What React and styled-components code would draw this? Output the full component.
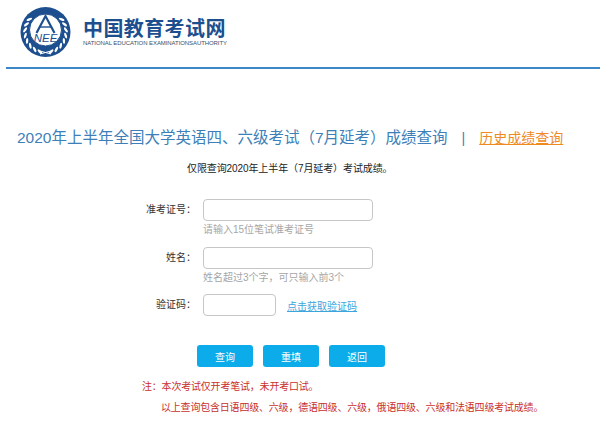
import React from "react";
import styled, { createGlobalStyle } from "styled-components";

const GlobalStyle = createGlobalStyle`
  html, body { margin: 0; padding: 0; background: #fff; }
  body { font-family: "Liberation Sans", "Noto Sans CJK SC", sans-serif; }
`;

const Page = styled.div`
  width: 600px;
  height: 426px;
  overflow: hidden;
`;

const Header = styled.header`
  display: flex;
  align-items: center;
  height: 63px;
  margin-left: 6px;
  padding: 0 0 4px 14px;
  border-bottom: 2px solid #3b86c4;
`;

const Brand = styled.div`
  margin-left: 12px;
  color: #1d4f8f;
`;

const BrandName = styled.div`
  font-size: 20px;
  line-height: 22px;
  font-weight: 700;
  letter-spacing: 0.4px;
`;

const BrandEnglish = styled.div`
  font-size: 6px;
  line-height: 6px;
  letter-spacing: -0.08px;
  color: #3c4f66;
  white-space: nowrap;
`;

const Title = styled.h1`
  margin: 58px 0 0 17px;
  font-size: 15.5px;
  line-height: 22px;
  font-weight: 400;
  color: #3d7fb8;
  white-space: nowrap;
`;

const Divider = styled.span`
  margin: 0 14px;
  font-size: 14px;
`;

const HistoryLink = styled.a`
  color: #ee8a1f;
  font-size: 14px;
  text-decoration: underline;
`;

const Notice = styled.p`
  margin: 13px 0 0;
  padding-left: 187px;
  font-size: 10px;
  line-height: 14px;
  letter-spacing: -0.1px;
  color: #222;
`;

const Form = styled.form`
  margin-top: 23px;
  display: flex;
  flex-direction: column;
`;

const Row = styled.div`
  display: grid;
  grid-template-columns: 196px auto;
  column-gap: 7px;
  margin-bottom: ${({ $gap }) => $gap}px;
`;

const Label = styled.label`
  font-size: 10px;
  line-height: 22px;
  color: #333;
  text-align: right;
`;

const Field = styled.div`
  display: flex;
  align-items: center;
  gap: 11px;
`;

const Input = styled.input`
  display: block;
  width: ${({ $width }) => $width}px;
  height: 22px;
  box-sizing: border-box;
  border: 1px solid #c6c6c6;
  border-radius: 4px;
  background: #fff;
  padding: 0 6px;
`;

const Hint = styled.div`
  margin-top: 2px;
  font-size: 10px;
  line-height: 14px;
  color: #a6a6a6;
`;

const CodeLink = styled.a`
  font-size: 10px;
  color: #3ba5dc;
  text-decoration: underline;
`;

const Actions = styled.div`
  display: flex;
  gap: 10px;
  margin: 29px 0 0 197px;
`;

const Button = styled.button`
  width: 56px;
  height: 22px;
  border: 0;
  border-radius: 3px;
  background: #0bace9;
  color: #fff;
  font-family: inherit;
  font-size: 10px;
  padding: 0;
`;

const NoteList = styled.div`
  margin: 13px 0 0 142px;
  color: #c9302c;
  font-size: 10px;
  line-height: 14px;
  letter-spacing: -0.2px;
`;

const NoteIndented = styled.p`
  margin: 7px 0 0 19px;
  white-space: nowrap;
`;

const NoteFirst = styled.p`
  margin: 0;
`;

const leaves = [0, 1, 2, 3, 4, 5, 6, 7];

const Emblem = () => (
  <svg width="51" height="50" viewBox="0 0 51 50">
    <circle cx="25.5" cy="25" r="25" fill="#1d4f8f" />
    <circle cx="25.5" cy="23" r="16" fill="#fff" stroke="#1d4f8f" strokeWidth="1" />
    {leaves.map((i) => {
      const deg = -38 + i * 16;
      const a = (deg * Math.PI) / 180;
      const x = 20.5 * Math.cos(a);
      const y = 25 + 20.5 * Math.sin(a);
      const r = deg + 60;
      return (
        <g key={i}>
          <ellipse cx={25.5 + x} cy={y} rx="3" ry="1.2" fill="#fff" transform={`rotate(${r} ${25.5 + x} ${y})`} />
          <ellipse cx={25.5 - x} cy={y} rx="3" ry="1.2" fill="#fff" transform={`rotate(${-r} ${25.5 - x} ${y})`} />
        </g>
      );
    })}
    <path d="M20 20 H31" stroke="#1d4f8f" strokeWidth="1.4" />
    <path d="M16.5 26 L25.5 9 L34.5 26" fill="none" stroke="#1d4f8f" strokeWidth="2.2" />
    <text x="25.5" y="35" textAnchor="middle" fontSize="11.5" fontStyle="italic" fill="#1d4f8f" fontFamily="Liberation Sans">NEE</text>
    <path d="M20 44 L31 47 M31 44 L20 47" stroke="#fff" strokeWidth="1" />
  </svg>
);

export default function App() {
  return (
    <Page>
      <GlobalStyle />
      <Header>
        <Emblem />
        <Brand>
          <BrandName>中国教育考试网</BrandName>
          <BrandEnglish>NATIONAL EDUCATION EXAMINATIONSAUTHORITY</BrandEnglish>
        </Brand>
      </Header>
      <Title>
        2020年上半年全国大学英语四、六级考试（7月延考）成绩查询
        <Divider>|</Divider>
        <HistoryLink>历史成绩查询</HistoryLink>
      </Title>
      <Notice>仅限查询2020年上半年（7月延考）考试成绩。</Notice>
      <Form>
        <Row $gap={10}>
          <Label>准考证号：</Label>
          <div>
            <Input $width={170} />
            <Hint>请输入15位笔试准考证号</Hint>
          </div>
        </Row>
        <Row $gap={9}>
          <Label>姓名：</Label>
          <div>
            <Input $width={170} />
            <Hint>姓名超过3个字，可只输入前3个</Hint>
          </div>
        </Row>
        <Row $gap={0}>
          <Label>验证码：</Label>
          <Field>
            <Input $width={73} />
            <CodeLink>点击获取验证码</CodeLink>
          </Field>
        </Row>
        <Actions>
          <Button type="button">查询</Button>
          <Button type="button">重填</Button>
          <Button type="button">返回</Button>
        </Actions>
      </Form>
      <NoteList>
        <NoteFirst>注：本次考试仅开考笔试，未开考口试。</NoteFirst>
        <NoteIndented>以上查询包含日语四级、六级，德语四级、六级，俄语四级、六级和法语四级考试成绩。</NoteIndented>
      </NoteList>
    </Page>
  );
}
